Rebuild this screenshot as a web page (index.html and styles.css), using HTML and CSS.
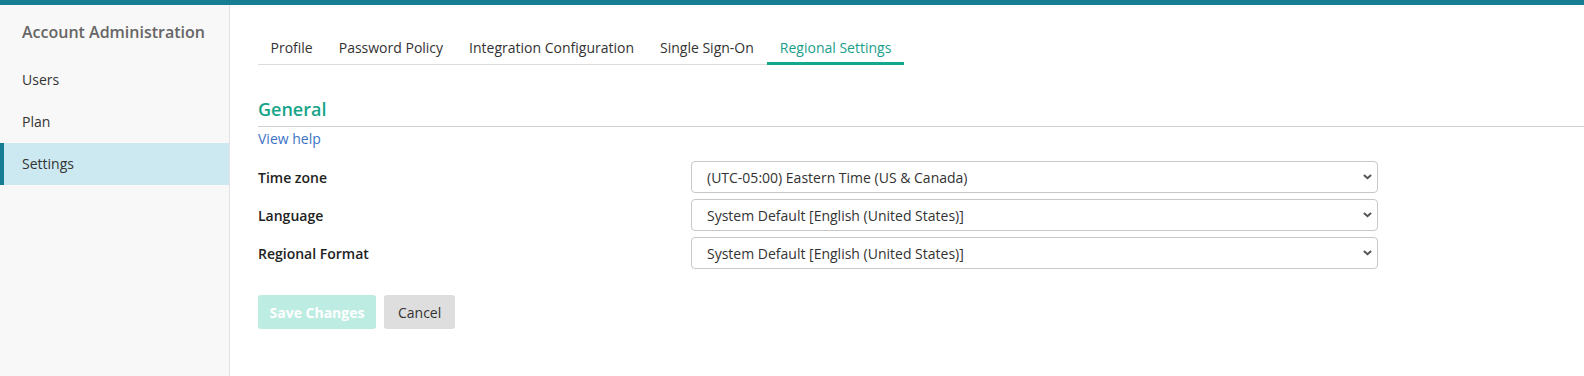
FILE: index.html
```html
<!DOCTYPE html>
<html lang="en">
<head>
  <meta charset="UTF-8">
  <title>Regional Settings - Account Administration</title>
  <link rel="stylesheet" href="styles.css">
</head>
<body>
  <div class="page">
    <div class="sidebar">
      <div class="side-title">Account Administration</div>
      <a href="#" class="side-link">Users</a>
      <a href="#" class="side-link">Plan</a>
      <a href="#" class="side-link active">Settings</a>
    </div>

    <div class="main">
      <div class="tabs">
        <a href="#" class="tab">Profile</a>
        <a href="#" class="tab">Password Policy</a>
        <a href="#" class="tab">Integration Configuration</a>
        <a href="#" class="tab">Single Sign-On</a>
        <a href="#" class="tab active">Regional Settings</a>
      </div>

      <div class="section-title">General</div>
      <a href="#" class="help">View help</a>

      <div class="form">
        <div class="row">
          <label class="label">Time zone</label>
          <div class="select-wrap">
            <select>
              <option>(UTC-05:00) Eastern Time (US &amp; Canada)</option>
            </select>
            <svg class="chev" width="9" height="6" viewBox="0 0 9 6"><path d="M0.9 1l3.6 3.2L8.1 1" fill="none" stroke="#555" stroke-width="2"/></svg>
          </div>
        </div>
        <div class="row">
          <label class="label">Language</label>
          <div class="select-wrap">
            <select>
              <option>System Default [English (United States)]</option>
            </select>
            <svg class="chev" width="9" height="6" viewBox="0 0 9 6"><path d="M0.9 1l3.6 3.2L8.1 1" fill="none" stroke="#555" stroke-width="2"/></svg>
          </div>
        </div>
        <div class="row">
          <label class="label">Regional Format</label>
          <div class="select-wrap">
            <select>
              <option>System Default [English (United States)]</option>
            </select>
            <svg class="chev" width="9" height="6" viewBox="0 0 9 6"><path d="M0.9 1l3.6 3.2L8.1 1" fill="none" stroke="#555" stroke-width="2"/></svg>
          </div>
        </div>
      </div>

      <div class="buttons">
        <button class="btn save" disabled>Save Changes</button>
        <button class="btn cancel">Cancel</button>
      </div>
    </div>
  </div>
</body>
</html>
```

FILE: styles.css
```css
body {
  margin: 0;
  font-family: 'Open Sans', 'Noto Sans', sans-serif;
  font-size: 14px;
  color: #333;
  background-color: #fff;
}

.page {
  display: flex;
  min-height: 376px;
  border-top: 5px solid #167d92;
  box-sizing: border-box;
}

/* 왼쪽 메뉴 */
.sidebar {
  width: 229px;
  flex-shrink: 0;
  background-color: #f8f8f8;
  border-right: 1px solid #e2e2e2;
}

.side-title {
  padding: 16px 22px;
  font-size: 16px;
  line-height: 22px;
  font-weight: 600;
  color: #666;
}

.side-link {
  display: block;
  padding: 0 22px;
  line-height: 42px;
  color: #333;
  text-decoration: none;
  border-left: 4px solid transparent;
  margin-left: -4px;
}

.side-link.active {
  margin-left: 0;
  padding-left: 18px;
  border-left-color: #167d92;
  background-color: #cce8f0;
}

/* 본문 */
.main {
  flex: 1;
  padding: 25px 0 0 28px;
}

.tabs {
  display: inline-flex;
  gap: 1px;
  border-bottom: 1px solid #dcdcdc;
}

.tab {
  padding: 8px 12.5px 4px;
  line-height: 20px;
  color: #333;
  text-decoration: none;
  border-bottom: 3px solid transparent;
  margin-bottom: -1px;
}

.tab.active {
  color: #1a9e8a;
  border-bottom-color: #13a88b;
}

.section-title {
  margin-top: 32px;
  padding-bottom: 5px;
  font-size: 18px;
  line-height: 24px;
  font-weight: 600;
  color: #17a589;
  border-bottom: 1px solid #d0d0d0;
}

.help {
  display: inline-block;
  margin-top: 2px;
  line-height: 20px;
  color: #3b73c4;
  text-decoration: none;
}

.form {
  margin-top: 12px;
  display: flex;
  flex-direction: column;
  gap: 6px;
  width: 1120px;
}

.row {
  display: flex;
  align-items: center;
}

.label {
  width: 433px;
  font-weight: 600;
  color: #222;
}

.select-wrap {
  position: relative;
  width: 687px;
}

.select-wrap select {
  width: 100%;
  height: 32px;
  padding: 0 30px 0 15px;
  font-family: inherit;
  font-size: 14px;
  color: #333;
  background-color: #fff;
  border: 1px solid #c8c8c8;
  border-radius: 4px;
  appearance: none;
  -webkit-appearance: none;
  outline: none;
}

.chev {
  position: absolute;
  right: 6px;
  top: 13px;
  pointer-events: none;
}

.buttons {
  display: flex;
  gap: 8px;
  margin-top: 26px;
}

.btn {
  height: 34px;
  font-family: inherit;
  font-size: 14px;
  border: none;
  border-radius: 3px;
}

.btn.save {
  padding: 0 11.5px;
  background-color: #bdece2;
  color: #fff;
  font-weight: 700;
}

.btn.cancel {
  padding: 0 14px;
  background-color: #dedede;
  color: #333;
  cursor: pointer;
}
```
